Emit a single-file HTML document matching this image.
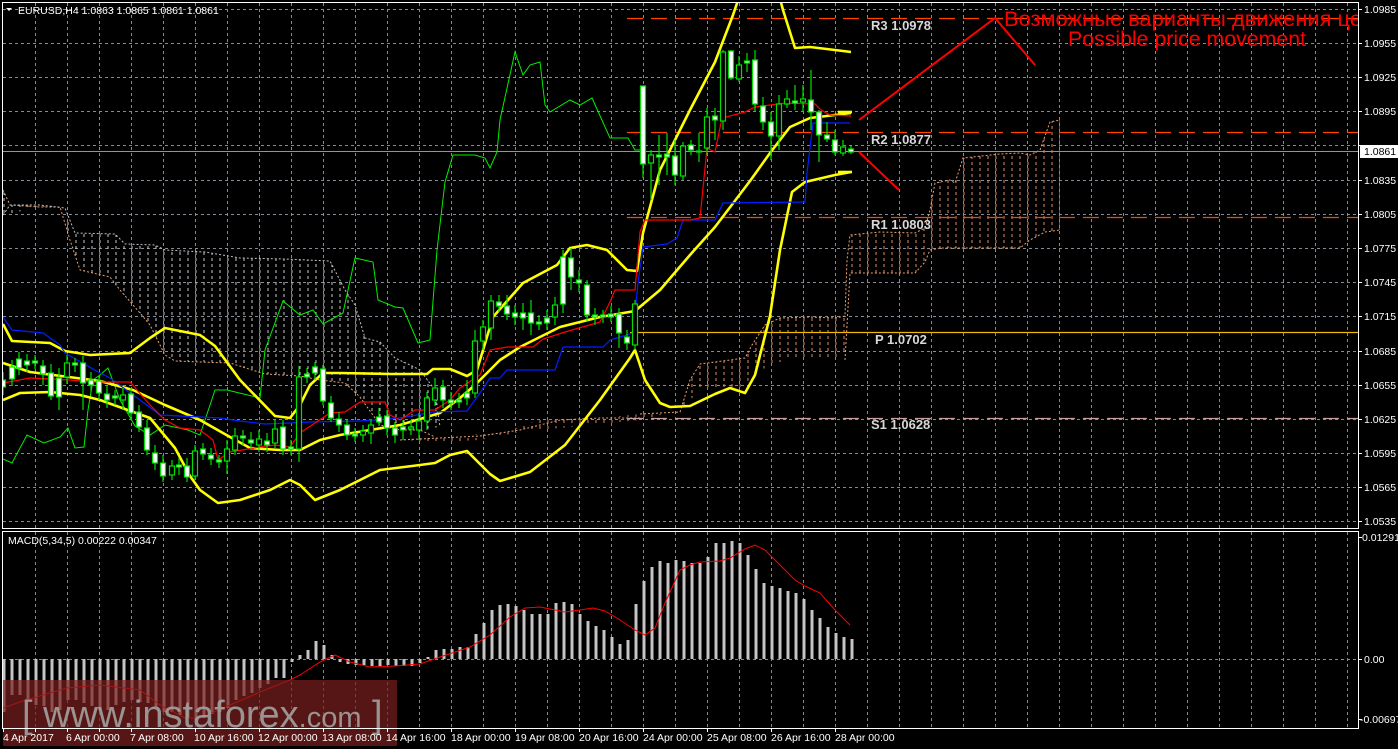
<!DOCTYPE html>
<html><head><meta charset="utf-8"><style>
html,body{margin:0;padding:0;background:#000;width:1398px;height:749px;overflow:hidden}
svg{display:block}
text{font-family:"Liberation Sans",sans-serif}
</style></head><body>
<svg width="1398" height="749" viewBox="0 0 1398 749" xmlns="http://www.w3.org/2000/svg">
<defs>
<pattern id="hatch" width="8" height="6" patternUnits="userSpaceOnUse"><line x1="4" y1="0" x2="4" y2="3" stroke="#d89068" stroke-width="1"/></pattern>
<pattern id="hatch2" width="8" height="6" patternUnits="userSpaceOnUse"><line x1="4" y1="0" x2="4" y2="3" stroke="#c8c8c8" stroke-width="1"/></pattern>
<clipPath id="mc"><rect x="3" y="3" width="1355" height="525"/></clipPath>
<clipPath id="dc"><rect x="3" y="532" width="1355" height="196"/></clipPath>
</defs>
<rect width="1398" height="749" fill="#000"/>
<g clip-path="url(#mc)">
<path stroke="#7f8c9c" stroke-width="1" stroke-dasharray="3,3" fill="none" d="M35.5 3V528M67.5 3V528M99.5 3V528M131.5 3V528M163.5 3V528M195.5 3V528M227.5 3V528M259.5 3V528M291.5 3V528M323.5 3V528M355.5 3V528M387.5 3V528M419.5 3V528M451.5 3V528M483.5 3V528M515.5 3V528M547.5 3V528M579.5 3V528M611.5 3V528M643.5 3V528M675.5 3V528M707.5 3V528M739.5 3V528M771.5 3V528M803.5 3V528M835.5 3V528M867.5 3V528M899.5 3V528M931.5 3V528M963.5 3V528M995.5 3V528M1027.5 3V528M1059.5 3V528M1091.5 3V528M1123.5 3V528M1155.5 3V528M1187.5 3V528M1219.5 3V528M1251.5 3V528M1283.5 3V528M1315.5 3V528M1347.5 3V528
M3 9.5H1358M3 43.5H1358M3 77.5H1358M3 111.5H1358M3 145.5H1358M3 180.5H1358M3 214.5H1358M3 248.5H1358M3 282.5H1358M3 316.5H1358M3 351.5H1358M3 385.5H1358M3 419.5H1358M3 453.5H1358M3 487.5H1358M3 521.5H1358"/>
<polygon fill="url(#hatch2)" points="3,190 10,205 40,206 60,207 75,234 115,234 125,244 155,245 165,250 205,252 240,258 290,259 330,261 345,290 355,305 365,338 380,342 395,358 410,365 420,370 435,390 440,427 420,430 400,430 380,425 360,397 345,383 300,376 265,374 230,363 175,361 165,355 150,325 140,313 120,290 110,277 80,270 70,240 60,207 40,207 3,215"/>
<polyline fill="none" stroke="#e8a070" stroke-dasharray="2,2" points="3,190 10,205 40,207 60,207 70,240 80,270 110,277 120,290 140,313 150,325 165,355 175,361 200,362 230,363 265,374 300,376 320,380 345,383 360,397 380,425 400,430 420,430 435,437"/>
<polyline fill="none" stroke="#c0c0c0" stroke-dasharray="2,2" points="3,215 10,205 40,205 65,208 75,233 115,234 125,244 155,245 165,250 205,252 240,258 285,259 330,261 345,290 355,305 365,338 380,342 395,358 410,365 420,370 435,390 440,427"/>
<polygon fill="url(#hatch)" points="400,440 430,437 465,435 500,433 540,420 560,418 600,418 640,414 680,412 690,380 700,364 730,360 745,358 752,345 765,325 780,318 810,317 835,318 845,316 847,260 850,235 880,232 915,233 925,228 930,210 935,183 950,180 955,183 963,158 1000,154 1020,153 1030,155 1040,150 1050,122 1060,120 1060,230 1045,232 1030,240 1020,248 940,248 930,250 925,262 915,273 850,273 845,350 835,358 790,358 760,370 740,388 700,390 680,410 640,420 600,424 560,428 520,432 480,440 440,442"/>
<polyline fill="none" stroke="#e8a070" stroke-dasharray="2,2" points="640,414 680,412 690,380 700,364 730,360 745,358 752,345 765,325 780,318 810,317 835,318 845,316 847,260 850,235 880,232 915,233 925,228 930,210 935,183 950,180 955,183 963,158 1000,154 1020,153 1030,155 1040,150 1050,122 1060,120"/>
<polyline fill="none" stroke="#e8a070" stroke-dasharray="2,2" points="845,360 850,273 915,273 925,262 930,250 940,248 1020,248 1030,240 1045,232 1060,230"/>
<polyline fill="none" stroke="#e8a070" stroke-dasharray="2,2" points="400,440 440,438 480,436 520,430 560,420 600,418 640,418"/>
<g stroke-width="1.3" stroke-dasharray="16,8">
<line x1="627" y1="18.5" x2="1358" y2="18.5" stroke="#ff4500"/>
<line x1="627" y1="132.5" x2="1358" y2="132.5" stroke="#ff4500"/>
<line x1="627" y1="217.5" x2="1358" y2="217.5" stroke="#ff4500"/>
<line x1="627" y1="418.5" x2="1358" y2="418.5" stroke="#c8a0a0"/>
</g>
<line x1="630" y1="332.5" x2="1358" y2="332.5" stroke="#f0b800" stroke-width="1.2"/>
<line x1="3" y1="151.5" x2="1358" y2="151.5" stroke="#8a96a4" stroke-width="1"/>
<polyline fill="none" stroke="#00f000" stroke-width="1" points="3,459 12,463 27,435 44,443 60,437 68,428 75,448 84,447 88,410 93,380 100,375 108,368 120,400 135,426 150,435 165,425 188,430 200,435 215,390 227,390 260,398 265,350 283,301 300,315 313,310 323,324 343,313 348,290 355,258 373,262 378,300 395,307 403,308 418,343 430,340 437,250 445,182 453,155 475,155 485,158 490,168 497,152 500,120 515,52 523,75 530,65 540,62 545,105 550,112 570,100 580,105 592,98 610,138 628,138 635,150 643,150"/>
<g fill="none" stroke="#ffff00" stroke-width="2.6" stroke-linejoin="round">
<polyline points="3,324 12,341 50,343 65,351 90,355 130,353 150,338 165,328 200,335 215,346 240,380 275,416 290,418 300,405 310,385 323,373 340,373 390,374 427,374 433,369 450,369 467,376 477,370 493,317 523,283 557,265 570,248 587,245 607,250 627,270 637,271 643,233 660,170 690,110 715,62 733,15 745,-20"/>
<polyline points="775,-20 783,10 795,48 810,47 835,50 851,52"/>
<polyline points="3,363 30,372 100,381 133,390 165,405 200,420 230,437 250,448 280,450 300,450 320,440 340,435 370,430 400,425 440,413 460,398 475,385 500,360 520,347 560,327 600,317 635,311 660,290 690,255 715,227 750,181 770,153 790,127 810,118 835,115 851,113"/>
<polyline points="3,400 20,393 50,392 80,395 100,400 150,418 175,448 190,476 200,490 218,503 240,500 270,490 290,480 300,485 315,500 340,490 380,470 420,465 435,463 450,455 467,451 490,474 500,481 530,472 565,445 600,400 630,358 635,350 645,380 660,403 670,407 690,406 715,394 730,388 745,393 755,375 770,316 780,250 792,192 805,182 835,175 851,172"/>
</g>
<polyline fill="none" stroke="#0020ff" stroke-width="1.2" points="3,317 12,330 43,333 60,345 65,353 100,373 110,378 140,400 160,415 220,418 240,421 265,424 290,423 310,422 360,421 400,418 433,412 467,411 480,393 490,378 500,378 507,370 555,370 563,347 603,347 610,340 633,333 638,283 643,247 667,244 677,238 683,220 715,220 723,203 805,202 807,173 813,123 850,123"/>
<polyline fill="none" stroke="#ff0000" stroke-width="1.2" points="3,383 30,378 70,380 90,382 130,382 150,405 165,420 180,428 200,430 213,440 218,460 230,452 260,447 275,445 290,447 300,433 330,413 345,412 360,402 385,402 390,415 400,420 415,410 435,410 450,400 460,388 480,375 490,350 507,347 533,347 543,339 565,332 600,322 610,302 615,290 635,290 640,232 645,220 690,220 700,218 707,148 715,152 722,118 730,116 745,112 755,107 785,103 815,104 821,110 830,115 851,116"/>
<path stroke="#00e000" stroke-width="1.2" fill="none" d="M3 372V395M12 360V386M19 352V375M27 354V372M35 355V369M43 360V385M51 364V400M59 368V410M67 355V384M75 358V372M83 356V410M91 372V392M99 376V400M107 385V408M115 390V405M123 388V410M131 388V420M139 405V432M147 420V455M155 445V470M163 455V482M172 460V480M179 458V475M187 458V482M195 445V480M203 443V460M211 448V465M219 455V468M227 440V474M235 428V455M243 430V445M251 432V450M259 430V452M267 433V452M275 420V448M283 420V455M291 440V455M299 366V462M307 368V383M315 362V380M323 365V405M331 396V422M339 412V432M347 420V440M355 428V442M363 425V442M371 420V444M379 408V426M387 410V435M395 422V443M403 420V440M411 420V435M419 413V440M427 392V430M435 378V406M443 380V408M451 392V410M459 393V408M467 380V405M475 330V398M483 320V350M491 295V340M499 295V312M507 295V320M515 305V325M523 303V330M531 300V335M539 315V330M547 310V330M555 297V325M563 250V313M571 248V290M579 270V292M587 280V322M595 308V325M603 310V323M611 306V322M619 308V348M627 330V350M635 300V350M643 86V178M651 150V200M659 135V185M667 133V175M675 140V185M683 142V180M691 140V155M699 133V162M707 108V155M715 108V140M723 50V130M731 50V80M739 56V82M747 53V72M755 50V112M763 97V130M771 112V160M779 95V150M787 90V108M795 85V110M803 85V112M811 70V130M819 110V162M827 122V142M835 130V155M843 140V156M851 146V154"/>
<g stroke="#00e000" stroke-width="1.2">
<g fill="#fff">
<rect x="0.5" y="380" width="5" height="7"/><rect x="9.5" y="367" width="5" height="12"/><rect x="16.5" y="359" width="5" height="9"/><rect x="24.5" y="361" width="5" height="4"/><rect x="32.5" y="361" width="5" height="2"/><rect x="40.5" y="366" width="5" height="8"/><rect x="48.5" y="373" width="5" height="23"/><rect x="56.5" y="378" width="5" height="19"/><rect x="72.5" y="363" width="5" height="2"/><rect x="80.5" y="363" width="5" height="20"/><rect x="88.5" y="380" width="5" height="5"/><rect x="96.5" y="381" width="5" height="12"/><rect x="104.5" y="394" width="5" height="6"/><rect x="112.5" y="396" width="5" height="2"/><rect x="128.5" y="394" width="5" height="19"/><rect x="136.5" y="412" width="5" height="15"/><rect x="144.5" y="428" width="5" height="22"/><rect x="152.5" y="453" width="5" height="10"/><rect x="160.5" y="463" width="5" height="13"/><rect x="176.5" y="465" width="5" height="2"/><rect x="184.5" y="466" width="5" height="11"/><rect x="200.5" y="449" width="5" height="5"/><rect x="208.5" y="455" width="5" height="4"/><rect x="216.5" y="460" width="5" height="2"/><rect x="240.5" y="436" width="5" height="2"/><rect x="248.5" y="440" width="5" height="3"/><rect x="264.5" y="441" width="5" height="4"/><rect x="280.5" y="427" width="5" height="22"/><rect x="288.5" y="447" width="5" height="2"/><rect x="304.5" y="374" width="5" height="3"/><rect x="312.5" y="367" width="5" height="6"/><rect x="320.5" y="369" width="5" height="32"/><rect x="328.5" y="403" width="5" height="15"/><rect x="336.5" y="419" width="5" height="6"/><rect x="344.5" y="425" width="5" height="10"/><rect x="352.5" y="434" width="5" height="2"/><rect x="376.5" y="417" width="5" height="5"/><rect x="384.5" y="416" width="5" height="12"/><rect x="392.5" y="428" width="5" height="7"/><rect x="400.5" y="427" width="5" height="3"/><rect x="440.5" y="387" width="5" height="13"/><rect x="448.5" y="400" width="5" height="3"/><rect x="456.5" y="400" width="5" height="2"/><rect x="464.5" y="393" width="5" height="5"/><rect x="496.5" y="302" width="5" height="4"/><rect x="504.5" y="306" width="5" height="8"/><rect x="512.5" y="313" width="5" height="4"/><rect x="520.5" y="313" width="5" height="5"/><rect x="528.5" y="313" width="5" height="10"/><rect x="536.5" y="322" width="5" height="2"/><rect x="544.5" y="318" width="5" height="5"/><rect x="560.5" y="257" width="5" height="47"/><rect x="568.5" y="258" width="5" height="19"/><rect x="576.5" y="280" width="5" height="3"/><rect x="584.5" y="285" width="5" height="30"/><rect x="592.5" y="315" width="5" height="2"/><rect x="600.5" y="315" width="5" height="2"/><rect x="608.5" y="314" width="5" height="3"/><rect x="616.5" y="314" width="5" height="19"/><rect x="624.5" y="337" width="5" height="6"/><rect x="640.5" y="86" width="5" height="78"/><rect x="656.5" y="155" width="5" height="2"/><rect x="664.5" y="154" width="5" height="3"/><rect x="672.5" y="156" width="5" height="19"/><rect x="688.5" y="145" width="5" height="5"/><rect x="696.5" y="151" width="5" height="1"/><rect x="712.5" y="116" width="5" height="4"/><rect x="728.5" y="51" width="5" height="27"/><rect x="744.5" y="61" width="5" height="2"/><rect x="752.5" y="60" width="5" height="44"/><rect x="760.5" y="106" width="5" height="16"/><rect x="768.5" y="122" width="5" height="14"/><rect x="792.5" y="101" width="5" height="2"/><rect x="808.5" y="100" width="5" height="12"/><rect x="816.5" y="112" width="5" height="23"/><rect x="824.5" y="135" width="5" height="4"/><rect x="832.5" y="140" width="5" height="12"/><rect x="848.5" y="149" width="5" height="3"/>
</g>
<g fill="#000">
<rect x="64.5" y="363" width="5" height="14"/><rect x="120.5" y="395" width="5" height="5"/><rect x="169.5" y="466" width="5" height="9"/><rect x="192.5" y="451" width="5" height="25"/><rect x="224.5" y="449" width="5" height="12"/><rect x="232.5" y="436" width="5" height="14"/><rect x="256.5" y="439" width="5" height="6"/><rect x="272.5" y="429" width="5" height="14"/><rect x="296.5" y="377" width="5" height="72"/><rect x="360.5" y="431" width="5" height="4"/><rect x="368.5" y="425" width="5" height="8"/><rect x="408.5" y="427" width="5" height="2"/><rect x="416.5" y="421" width="5" height="9"/><rect x="424.5" y="398" width="5" height="23"/><rect x="432.5" y="388" width="5" height="12"/><rect x="472.5" y="341" width="5" height="52"/><rect x="480.5" y="327" width="5" height="14"/><rect x="488.5" y="301" width="5" height="27"/><rect x="552.5" y="305" width="5" height="12"/><rect x="632.5" y="304" width="5" height="41"/><rect x="648.5" y="155" width="5" height="8"/><rect x="680.5" y="146" width="5" height="30"/><rect x="704.5" y="117" width="5" height="31"/><rect x="720.5" y="52" width="5" height="69"/><rect x="736.5" y="65" width="5" height="14"/><rect x="776.5" y="104" width="5" height="32"/><rect x="784.5" y="99" width="5" height="5"/><rect x="800.5" y="99" width="5" height="3"/><rect x="840.5" y="147" width="5" height="6"/>
</g></g>
<g stroke-width="2.6"><line x1="838" y1="112" x2="852" y2="112" stroke="#ffff00"/><line x1="838" y1="172" x2="852" y2="172" stroke="#ffff00"/></g>
<g font-family="'Liberation Mono',monospace" font-size="13" font-weight="bold" fill="#d8d8d8">
<text x="871" y="30">R3 1.0978</text>
<text x="871" y="144">R2 1.0877</text>
<text x="871" y="229">R1 1.0803</text>
<text x="875" y="344">P 1.0702</text>
<text x="871" y="429">S1 1.0628</text>
</g>
<polyline fill="none" stroke="#ff0000" stroke-width="2" points="859,120 995,18 1035,65"/>
<line x1="859" y1="152" x2="899" y2="190" stroke="#ff0000" stroke-width="2"/>
<text x="1004" y="26" font-size="21" fill="#ff0000" textLength="370" lengthAdjust="spacingAndGlyphs">Возможные варианты движения цен</text>
<text x="1068" y="46" font-size="21" fill="#ff0000" textLength="238" lengthAdjust="spacingAndGlyphs">Possible price movement</text>
<polygon points="6,8 12,8 9,11" fill="#fff"/>
<text x="18" y="14" font-size="10.5" fill="#fff">EURUSD,H4  1.0863 1.0865 1.0861 1.0861</text>
</g>
<g clip-path="url(#dc)">
<path stroke="#7f8c9c" stroke-width="1" stroke-dasharray="3,3" fill="none" d="M35.5 532V728M67.5 532V728M99.5 532V728M131.5 532V728M163.5 532V728M195.5 532V728M227.5 532V728M259.5 532V728M291.5 532V728M323.5 532V728M355.5 532V728M387.5 532V728M419.5 532V728M451.5 532V728M483.5 532V728M515.5 532V728M547.5 532V728M579.5 532V728M611.5 532V728M643.5 532V728M675.5 532V728M707.5 532V728M739.5 532V728M771.5 532V728M803.5 532V728M835.5 532V728M867.5 532V728M899.5 532V728M931.5 532V728M963.5 532V728M995.5 532V728M1027.5 532V728M1059.5 532V728M1091.5 532V728M1123.5 532V728M1155.5 532V728M1187.5 532V728M1219.5 532V728M1251.5 532V728M1283.5 532V728M1315.5 532V728M1347.5 532V728M3 659.5H1358"/>
<path stroke="#c4c4c4" stroke-width="3" fill="none" d="M4 659V712M12 659V695M20 659V695M28 659V700M36 659V705M44 659V706M52 659V712M60 659V710M68 659V700M76 659V700M84 659V703M92 659V706M100 659V710M108 659V710M116 659V705M124 659V702M132 659V700M140 659V702M148 659V703M156 659V707M164 659V712M172 659V712M180 659V715M188 659V718M196 659V720M204 659V718M212 659V714M220 659V712M228 659V708M236 659V700M244 659V696M252 659V693M260 659V688M268 659V684M276 659V678M284 659V678M292 659V662M300 659V655M308 659V650M316 659V641M324 659V645M332 659V655M340 659V662M348 659V664M356 659V665M364 659V665M372 659V666M380 659V666M388 659V665M396 659V666M404 659V666M412 659V666M420 659V663M428 659V657M436 659V650M444 659V649M452 659V649M460 659V647M468 659V647M476 659V634M484 659V623M492 659V610M500 659V605M508 659V604M516 659V606M524 659V610M532 659V614M540 659V614M548 659V614M556 659V603M564 659V602M572 659V604M580 659V614M588 659V621M596 659V626M604 659V630M612 659V637M620 659V644M628 659V640M636 659V604M644 659V581M652 659V567M660 659V561M668 659V563M676 659V560M684 659V561M692 659V563M700 659V563M708 659V557M716 659V543M724 659V543M732 659V541M740 659V543M748 659V555M756 659V569M764 659V583M772 659V586M780 659V588M788 659V591M796 659V593M804 659V599M812 659V610M820 659V618M828 659V627M836 659V633M844 659V637M852 659V639"/>
<polyline fill="none" stroke="#ff0000" stroke-width="1" points="3,708 20,702 50,693 67,688 100,685 140,690 160,705 185,718 200,718 230,705 265,690 290,680 300,675 320,662 335,655 350,662 370,667 395,666 420,664 440,657 470,647 490,635 510,617 525,608 540,607 565,612 580,610 593,608 605,611 620,620 635,630 645,635 655,628 665,603 680,570 690,565 700,562 720,561 730,558 745,549 755,545 765,550 780,565 795,580 805,586 820,593 835,610 850,625"/>
<text x="8" y="544" font-size="10.5" fill="#fff">MACD(5,34,5) 0.00222 0.00347</text>
</g>
<rect x="3" y="680" width="394" height="66" fill="#7a2020" opacity="0.7"/>
<text x="22" y="727" font-size="38" fill="#a8a8a8" opacity="0.85">[ www.instaforex<tspan font-size="29">.com</tspan> ]</text>
<g fill="none" stroke="#fff" stroke-width="1">
<rect x="2.5" y="2.5" width="1356" height="526"/>
<rect x="2.5" y="531.5" width="1356" height="197"/>
</g>
<g stroke="#fff" stroke-width="1">
<path d="M1358 9.5h4M1358 43.5h4M1358 77.5h4M1358 111.5h4M1358 145.5h4M1358 180.5h4M1358 214.5h4M1358 248.5h4M1358 282.5h4M1358 316.5h4M1358 351.5h4M1358 385.5h4M1358 419.5h4M1358 453.5h4M1358 487.5h4M1358 521.5h4M1358 537.5h4M1358 659.5h4M1358 719.5h4"/>
</g>
<g font-size="10.5" fill="#fff">
<text x="1364" y="13">1.0985</text><text x="1364" y="47">1.0955</text><text x="1364" y="81">1.0925</text><text x="1364" y="115">1.0895</text><text x="1364" y="184">1.0835</text><text x="1364" y="218">1.0805</text><text x="1364" y="252">1.0775</text><text x="1364" y="286">1.0745</text><text x="1364" y="320">1.0715</text><text x="1364" y="355">1.0685</text><text x="1364" y="389">1.0655</text><text x="1364" y="423">1.0625</text><text x="1364" y="457">1.0595</text><text x="1364" y="491">1.0565</text><text x="1364" y="525">1.0535</text>
<text x="1362" y="541">0.01291</text><text x="1364" y="663">0.00</text><text x="1360" y="723">-0.00697</text>
</g>
<rect x="1360" y="145" width="38" height="13" fill="#fff"/>
<text x="1364" y="155" font-size="10.5" fill="#000">1.0861</text>
<g stroke="#fff"><path d="M3.5 728v4M35.5 728v4M67.5 728v4M99.5 728v4M131.5 728v4M195.5 728v4M259.5 728v4M323.5 728v4M387.5 728v4M451.5 728v4M515.5 728v4M579.5 728v4M643.5 728v4M707.5 728v4M771.5 728v4M835.5 728v4"/></g>
<g font-size="10.5" fill="#fff">
<text x="3" y="741">4 Apr 2017</text><text x="66" y="741">6 Apr 00:00</text><text x="130" y="741">7 Apr 08:00</text><text x="194" y="741">10 Apr 16:00</text><text x="258" y="741">12 Apr 00:00</text><text x="322" y="741">13 Apr 08:00</text><text x="386" y="741">14 Apr 16:00</text><text x="451" y="741">18 Apr 00:00</text><text x="515" y="741">19 Apr 08:00</text><text x="579" y="741">20 Apr 16:00</text><text x="643" y="741">24 Apr 00:00</text><text x="707" y="741">25 Apr 08:00</text><text x="771" y="741">26 Apr 16:00</text><text x="835" y="741">28 Apr 00:00</text>
</g>
</svg>
</body></html>
